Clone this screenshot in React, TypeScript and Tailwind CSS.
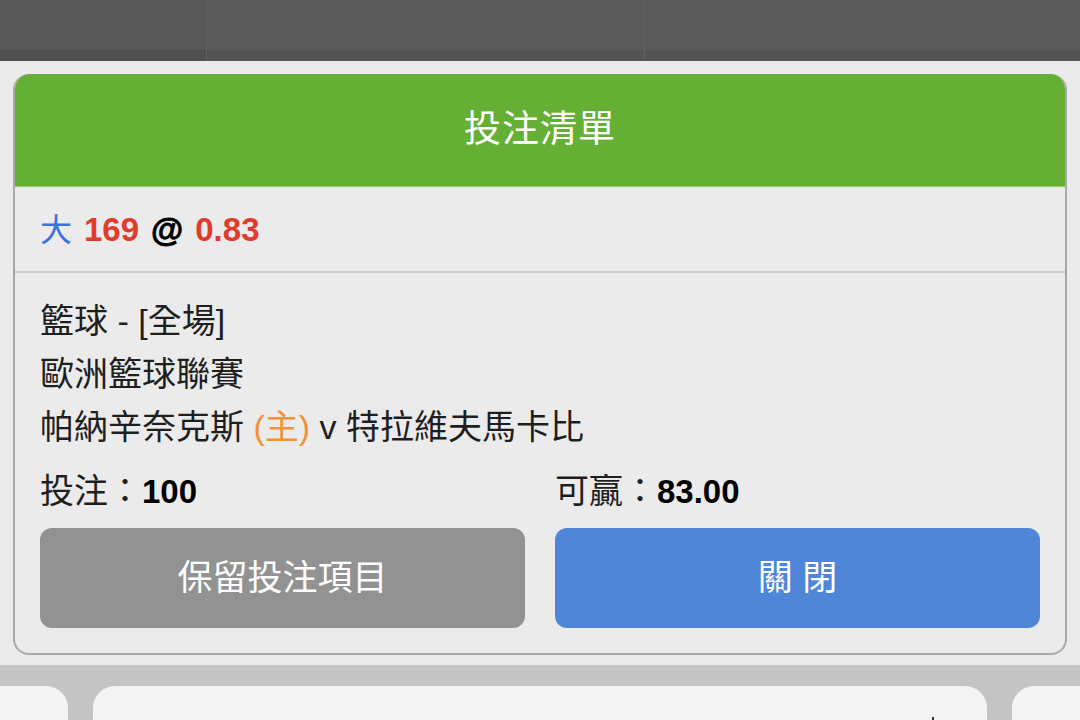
import React from "react";

const font = {
  fontFamily: '"Liberation Sans", Roboto, "Noto Sans CJK TC", sans-serif',
};

const TopBar = () => (
  <div className="flex h-[61px] bg-[#585858]">
    <div className="flex w-[207px] flex-col border-r border-[#616161]">
      <div className="h-[50px] bg-[#585858]" />
      <div className="h-[11px] bg-[#4f4f4f]" />
    </div>
    <div className="flex w-[438px] flex-col border-r border-[#616161]">
      <div className="h-[50px] bg-[#5a5a5a]" />
      <div className="h-[11px] bg-[#535353]" />
    </div>
    <div className="flex flex-1 flex-col">
      <div className="h-[50px] bg-[#5a5a5a]" />
      <div className="h-[11px] bg-[#535353]" />
    </div>
  </div>
);

const BetSlip = () => (
  <div className="flex h-[581px] flex-col overflow-hidden rounded-[16px] border-2 border-t-0 border-[#a9a9a9] bg-[#ebebeb]">
    <div className="-mx-[2px] flex h-[113px] items-center justify-center rounded-t-[16px] border-b border-[#8fd060] bg-[#65b034]">
      <span className="text-[37px] tracking-[1px] text-white">投注清單</span>
    </div>
    <div className="flex h-[86px] items-center gap-[12px] border-b-2 border-[#c9c9c9] px-[25px] pt-[2px] text-[33px] font-bold">
      <span className="text-[32px] font-normal text-[#3b6fe2]">大</span>
      <span className="text-[#e03b2b]">169</span>
      <span className="text-black [-webkit-text-stroke:0.8px_black]">@</span>
      <span className="text-[#e03b2b]">0.83</span>
    </div>
    <div className="flex flex-1 flex-col px-[25px] pt-[22px] text-[34px] text-[#1e1e1e]">
      <div className="leading-[53px]">籃球 - [全場]</div>
      <div className="leading-[53px]">歐洲籃球聯賽</div>
      <div className="leading-[53px]">
        帕納辛奈克斯 <span className="text-[#f0923a]">(主)</span> v 特拉維夫馬卡比
      </div>
      <div className="mt-[11px] grid grid-cols-2 gap-x-[30px] leading-[53px]">
        <div>
          投注：<span className="text-[33px] font-bold text-black">100</span>
        </div>
        <div>
          可贏：<span className="text-[33px] font-bold text-black">83.00</span>
        </div>
      </div>
      <div className="mt-[10px] grid grid-cols-2 gap-x-[30px]">
        <button className="flex h-[100px] items-center justify-center rounded-[12px] bg-[#929292] text-[35px] text-white">
          保留投注項目
        </button>
        <button className="flex h-[100px] items-center justify-center rounded-[12px] bg-[#4f86d8] text-[35px] text-white">
          關 閉
        </button>
      </div>
    </div>
  </div>
);

const BottomTabs = () => (
  <div className="flex flex-1 flex-col bg-[#c4c4c4]">
    <div className="h-[10px] bg-[#ebebeb]" />
    <div className="h-[21px]" />
    <div className="flex flex-1 gap-[25px]">
      <div className="w-[68px] rounded-tr-[22px] bg-[#f4f4f4]" />
      <div className="relative flex-1 rounded-t-[22px] bg-[#f4f4f4]">
        <div className="absolute bottom-0 right-[53px] h-[3px] w-[2px] bg-[#333]" />
      </div>
      <div className="w-[68px] rounded-tl-[22px] bg-[#f4f4f4]" />
    </div>
  </div>
);

export default function App() {
  return (
    <div className="flex h-[720px] w-[1080px] flex-col overflow-hidden bg-[#ebebeb]" style={font}>
      <TopBar />
      <div className="px-[13px] pt-[13px]">
        <BetSlip />
      </div>
      <BottomTabs />
    </div>
  );
}
